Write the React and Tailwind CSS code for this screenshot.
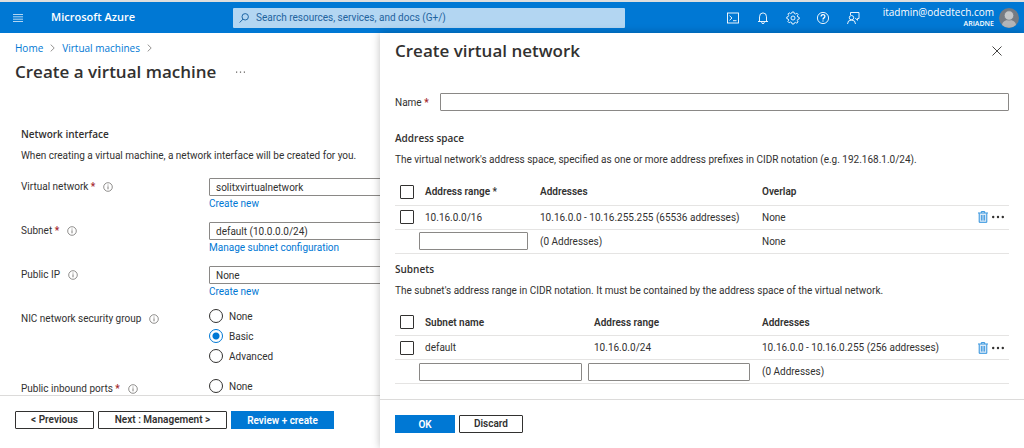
import { useState } from 'react';

const InfoIcon = () => (
  <svg className="size-[10px] shrink-0" viewBox="0 0 10 10" fill="none" stroke="#605e5c">
    <circle cx="5" cy="5" r="4.3" strokeWidth="0.7" />
    <path d="M5 4.3v3M5 2.6v0.9" strokeWidth="0.8" />
  </svg>
);

const ChevronIcon = () => (
  <svg className="h-2 w-[5px]" viewBox="0 0 5 8" fill="none" stroke="#8a8886" strokeWidth="0.9">
    <path d="M0.7 0.6L4.2 4L0.7 7.4" />
  </svg>
);

const TrashIcon = () => (
  <svg className="h-3 w-[10px]" viewBox="0 0 10 12" fill="none" stroke="#1a86d9">
    <path d="M1.2 2.3v9h7.6v-9" fill="#deecf9" strokeWidth="0.9" />
    <path d="M0 2h10M3.3 1.8V0.6h3.4v1.2" strokeWidth="0.9" />
    <path d="M3.4 4v5.6M5 4v5.6M6.6 4v5.6" strokeWidth="0.8" />
  </svg>
);

const DotsIcon = () => (
  <svg className="h-1 w-3" viewBox="0 0 12 4" fill="#323130">
    <circle cx="1.2" cy="2" r="1.2" />
    <circle cx="6" cy="2" r="1.2" />
    <circle cx="10.8" cy="2" r="1.2" />
  </svg>
);

const toolbarIcons = [
  {
    label: 'Cloud Shell',
    drawing: (
      <>
        <rect x="1.5" y="2" width="11" height="10" />
        <path d="M3.5 4.7L6 7L3.5 9.3M7 9.7h3.5" />
      </>
    ),
  },
  {
    label: 'Notifications',
    drawing: <path d="M3.5 10.5V5.8a3.5 3.9 0 0 1 7 0v4.7M2 10.5h10M5.7 10.7v0.6a1.3 1.3 0 0 0 2.6 0v-0.6" />,
  },
  {
    label: 'Settings',
    drawing: (
      <>
        <path d="M6.1 1h1.8l0.4 1.5 1.2 0.5 1.4-0.8 1.2 1.2-0.8 1.4 0.5 1.2 1.4 0.4v1.6l-1.4 0.4-0.5 1.2 0.8 1.4-1.2 1.2-1.4-0.8-1.2 0.5L7.9 13H6.1l-0.4-1.5-1.2-0.5-1.4 0.8-1.2-1.2 0.8-1.4-0.5-1.2L0.8 7.6V6l1.4-0.4 0.5-1.2-0.8-1.4 1.2-1.2 1.4 0.8 1.2-0.5z" />
        <circle cx="7" cy="7" r="2" />
      </>
    ),
  },
  {
    label: 'Help',
    drawing: (
      <>
        <circle cx="7" cy="7" r="5.6" />
        <path d="M5.1 5.4a1.9 1.8 0 1 1 2.9 1.5C7.3 7.4 7 7.7 7 8.5M7 9.5v1.1" strokeWidth="1.3" />
      </>
    ),
  },
  {
    label: 'Feedback',
    drawing: (
      <>
        <path d="M4.5 4V1.5H13v6h-1.5v1.8L9.7 7.5H9" />
        <circle cx="5.5" cy="6.7" r="2.2" />
        <path d="M1.5 13a4 4 0 0 1 8 0" />
      </>
    ),
  },
];

const titleFont = "font-['Open_Sans','Noto_Sans',sans-serif] font-semibold";
const inputClass = 'h-[18px] w-full rounded-[1px] border border-[#8a8886] bg-white px-1.5 outline-none';
const checkboxClass = 'block size-[14px] appearance-none rounded-[1px] border border-[#323130] bg-white checked:bg-[#0078d4]';
const primaryButton = 'h-[18px] bg-[#0078d4] text-center font-semibold text-white';
const secondaryButton = 'h-[18px] rounded-[1px] border border-[#323130] bg-white text-center font-semibold leading-4';

const Header = () => (
  <header className="flex h-[33px] shrink-0 items-center border-t-2 border-[#dedede] bg-[#0078d4] text-white">
    <button aria-label="Show portal menu" className="ml-[13px]">
      <svg className="h-2 w-[10px]" viewBox="0 0 10 8" stroke="#fff" strokeWidth="0.7">
        <path d="M0 0.5h10M0 2.8h10M0 5.2h10M0 7.5h10" />
      </svg>
    </button>
    <span className={`${titleFont} ml-7 w-[182px] text-[11px]`}>Microsoft Azure</span>
    <label className="flex h-5 w-[392px] items-center gap-[7px] rounded-[1px] bg-[#b3d6f2] px-1.5">
      <svg className="size-[10px]" viewBox="0 0 10 10" fill="none" stroke="#0f5a9c" strokeWidth="0.9">
        <circle cx="6.2" cy="3.8" r="3.2" />
        <path d="M4 6.2L0.5 9.6" />
      </svg>
      <input
        type="search"
        aria-label="Search"
        placeholder="Search resources, services, and docs (G+/)"
        className="min-w-0 flex-1 bg-transparent text-[#0f5a9c] outline-none placeholder:text-[#1f639e]"
      />
    </label>
    <nav className="ml-auto flex gap-4 pr-[23px]">
      {toolbarIcons.map((icon) => (
        <button key={icon.label} aria-label={icon.label}>
          <svg className="size-[14px]" viewBox="0 0 14 14" fill="none" stroke="#fff" strokeWidth="0.9">
            {icon.drawing}
          </svg>
        </button>
      ))}
    </nav>
    <div className="text-right font-['Open_Sans','Noto_Sans',sans-serif]">
      <div className="leading-3">itadmin@odedtech.com</div>
      <div className="text-[7px] font-semibold leading-3">ARIADNE</div>
    </div>
    <svg className="mx-[5px] size-5" viewBox="0 0 20 20">
      <circle cx="10" cy="10" r="10" fill="#767b82" />
      <path d="M3 17c0.5-3.5 3-5 7-5s6.5 1.5 7 5a10 10 0 0 1-14 0z" fill="#b3b5b8" />
      <circle cx="10" cy="7.5" r="4.7" fill="#c4c6c8" stroke="#767b82" strokeWidth="0.7" />
    </svg>
  </header>
);

const FieldLabel = ({ htmlFor, text, required }) => (
  <div className="flex w-[188px] shrink-0 items-center gap-2 self-start leading-[18px]">
    <label htmlFor={htmlFor}>
      {text} {required && <span className="font-semibold text-[#a4262c]">*</span>}
    </label>
    <InfoIcon />
  </div>
);

const SelectField = ({ id, label, required, value, link }) => (
  <div className="flex h-11">
    <FieldLabel htmlFor={id} text={label} required={required} />
    <div className="flex-1">
      <select id={id} className={`${inputClass} block appearance-none`}>
        <option>{value}</option>
      </select>
      <a href="#" className="block leading-4 text-[#0078d4]">{link}</a>
    </div>
  </div>
);

const RadioOption = ({ name, text, checked, onChange }) => (
  <label className="flex h-5 items-center gap-1.5">
    <input
      type="radio"
      name={name}
      checked={checked}
      onChange={onChange}
      className="size-[14px] appearance-none rounded-full border border-[#323130] bg-white checked:border-[#0078d4] checked:bg-[radial-gradient(circle,#0078d4_3px,#fff_4px)]"
    />
    {text}
  </label>
);

const VirtualMachineForm = () => {
  const [group, setGroup] = useState('Basic');
  const [ports, setPorts] = useState('');

  return (
    <main className="flex h-full flex-col">
      <nav className="flex items-center gap-[7px] px-[15px] pt-[7px] font-['Open_Sans','Noto_Sans',sans-serif] leading-4 text-[#0078d4]">
        <a href="#">Home</a>
        <ChevronIcon />
        <a href="#">Virtual machines</a>
        <ChevronIcon />
      </nav>
      <div className="flex items-center gap-5 px-[15px] pt-1">
        <h1 className={`${titleFont} text-[17px] leading-6`}>Create a virtual machine</h1>
        <button aria-label="More actions">
          <svg className="h-1 w-[9px]" viewBox="0 0 9 4" fill="#605e5c">
            <path d="M0 1.5h1.2v1.2H0zM3.9 1.5h1.2v1.2H3.9zM7.8 1.5H9v1.2H7.8z" />
          </svg>
        </button>
      </div>
      <div className="min-h-0 flex-1 overflow-hidden px-[21px] pt-[42px]">
        <h2 className={`${titleFont} leading-4`}>Network interface</h2>
        <p className="mt-1.5 leading-4">
          When creating a virtual machine, a network interface will be created for you.
        </p>
        <div className="mt-[14px] w-[520px]">
          <SelectField id="vnet" label="Virtual network" required value="solitxvirtualnetwork" link="Create new" />
          <SelectField id="subnet" label="Subnet" required value="default (10.0.0.0/24)" link="Manage subnet configuration" />
          <SelectField id="ip" label="Public IP" value="None" link="Create new" />
          <div className="flex h-[70px]">
            <FieldLabel text="NIC network security group" />
            <div className="-mt-1">
              {['None', 'Basic', 'Advanced'].map((option) => (
                <RadioOption
                  key={option}
                  name="group"
                  text={option}
                  checked={group === option}
                  onChange={() => setGroup(option)}
                />
              ))}
            </div>
          </div>
          <div className="flex">
            <FieldLabel text="Public inbound ports" required />
            <div className="-mt-1">
              <RadioOption name="ports" text="None" checked={ports === 'None'} onChange={() => setPorts('None')} />
            </div>
          </div>
        </div>
      </div>
      <footer className="flex h-[53px] shrink-0 gap-1 border-t border-[#dcdbda] px-[15px] pt-[15px]">
        <button className={`${secondaryButton} w-[79px]`}>&lt; Previous</button>
        <button className={`${secondaryButton} w-[129px]`}>Next : Management &gt;</button>
        <button className={`${primaryButton} w-[103px]`}>Review + create</button>
      </footer>
    </main>
  );
};

const RowActions = () => (
  <div className="flex items-center justify-end gap-1 pr-[5px]">
    <button aria-label="Delete"><TrashIcon /></button>
    <button aria-label="More"><DotsIcon /></button>
  </div>
);

const DataTable = ({ columns, widths, row, newRow }) => (
  <table className="mt-[11px] w-full table-fixed text-left">
    <colgroup>
      <col className="w-6" />
      <col className={widths[0]} />
      <col className={widths[1]} />
      <col />
      <col className="w-10" />
    </colgroup>
    <thead>
      <tr className="h-[26px] border-b border-[#e5e4e3]">
        <td className="pl-[5px]"><input type="checkbox" aria-label="Select all" className={checkboxClass} /></td>
        {columns.map((column) => (
          <th key={column} className="px-1.5 font-semibold">{column}</th>
        ))}
        <td></td>
      </tr>
    </thead>
    <tbody>
      <tr className="h-6 border-b border-[#e5e4e3]">
        <td className="pl-[5px]"><input type="checkbox" aria-label={row[0]} className={checkboxClass} /></td>
        {row.map((cell) => (
          <td key={cell} className="px-1.5">{cell}</td>
        ))}
        <td><RowActions /></td>
      </tr>
      <tr className="h-6 border-b border-[#e5e4e3]">
        <td></td>
        {newRow.map((cell, i) => (
          cell === null ? (
            <td key={i} className="pr-1.5">
              <input type="text" aria-label={columns[i]} className={`${inputClass} block`} />
            </td>
          ) : (
            <td key={i} className="px-1.5">{cell}</td>
          )
        ))}
        <td></td>
      </tr>
    </tbody>
  </table>
);

const VirtualNetworkPanel = () => {
  const [name, setName] = useState('');

  return (
    <aside className="absolute inset-y-0 right-0 flex w-[644px] flex-col bg-white shadow-[0_0_8px_rgba(0,0,0,0.25)]">
      <div className="min-h-0 flex-1 px-[15px]">
        <div className="flex items-center justify-between pr-[7px] pt-1.5">
          <h2 className={`${titleFont} text-[17px] leading-6`}>Create virtual network</h2>
          <button aria-label="Close">
            <svg className="size-[10px]" viewBox="0 0 10 10" stroke="#323130" strokeWidth="0.9">
              <path d="M0.5 0.5l9 9M9.5 0.5l-9 9" />
            </svg>
          </button>
        </div>
        <div className="mt-[30px] flex items-center">
          <label htmlFor="name" className="w-[45px] shrink-0">
            Name <span className="font-semibold text-[#a4262c]">*</span>
          </label>
          <input
            id="name"
            type="text"
            value={name}
            onChange={(e) => setName(e.target.value)}
            className={inputClass}
          />
        </div>
        <h3 className={`${titleFont} mt-[19px] leading-4`}>Address space</h3>
        <p className="mt-1.5 leading-4">
          The virtual network's address space, specified as one or more address prefixes in CIDR notation (e.g. 192.168.1.0/24).
        </p>
        <DataTable
          columns={['Address range *', 'Addresses', 'Overlap']}
          widths={['w-[115px]', 'w-[222px]']}
          row={['10.16.0.0/16', '10.16.0.0 - 10.16.255.255 (65536 addresses)', 'None']}
          newRow={[null, '(0 Addresses)', 'None']}
        />
        <h3 className={`${titleFont} mt-[7px] leading-4`}>Subnets</h3>
        <p className="mt-1.5 leading-4">
          The subnet's address range in CIDR notation. It must be contained by the address space of the virtual network.
        </p>
        <DataTable
          columns={['Subnet name', 'Address range', 'Addresses']}
          widths={['w-[169px]', 'w-[168px]']}
          row={['default', '10.16.0.0/24', '10.16.0.0 - 10.16.0.255 (256 addresses)']}
          newRow={[null, null, '(0 Addresses)']}
        />
      </div>
      <footer className="flex h-[49px] shrink-0 gap-1 border-t border-[#dcdbda] px-[15px] pt-[15px]">
        <button className={`${primaryButton} w-[60px]`}>OK</button>
        <button className={`${secondaryButton} w-16`}>Discard</button>
      </footer>
    </aside>
  );
};

const App = () => {
  return (
    <div className="flex h-screen flex-col overflow-hidden bg-white font-['Roboto','Noto_Sans',sans-serif] text-[10px] text-[#323130]">
      <Header />
      <div className="relative min-h-0 flex-1">
        <VirtualMachineForm />
        <VirtualNetworkPanel />
      </div>
    </div>
  );
};

export default App;
